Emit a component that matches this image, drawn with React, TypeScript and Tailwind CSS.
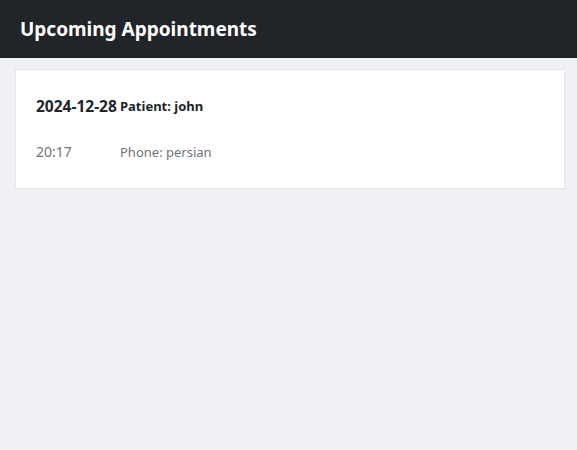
import React from 'react';

const appointments = [
  { date: '2024-12-28', time: '20:17', patient: 'john', phone: 'persian' },
];

const App: React.FC = () => {
  return (
    <div className="min-h-[450px] bg-[#f0f1f5] font-['Noto_Sans',sans-serif] text-[#212529]">
      {/* Header */}
      <header className="h-[58px] bg-[#212529] flex items-center px-5">
        <h1 className="text-[19px] font-bold text-white">Upcoming Appointments</h1>
      </header>

      <div className="pl-[15px] pr-3 pt-[11px] pb-3">
        {appointments.map((a) => (
          <div key={a.date + a.time} className="bg-white border border-[#e4e5e8] px-5 pt-6 pb-6">
            <div className="grid grid-cols-[84px_1fr] items-center">
              <div className="text-[15.5px] font-bold leading-[24px]">{a.date}</div>
              <div className="text-[13px] font-bold leading-[24px]">Patient: {a.patient}</div>
            </div>
            <div className="grid grid-cols-[84px_1fr] items-center mt-[22px] text-[13px] text-[#6c757d]">
              <div className="leading-[24px] text-[14px]">{a.time}</div>
              <div className="leading-[24px]">Phone: {a.phone}</div>
            </div>
          </div>
        ))}
      </div>
    </div>
  );
};

export default App;
